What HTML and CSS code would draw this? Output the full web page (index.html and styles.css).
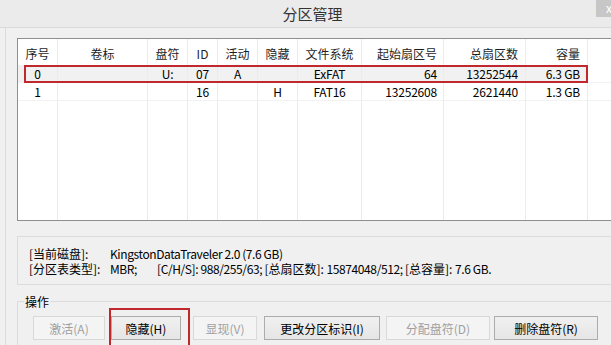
FILE: index.html
```html
<!DOCTYPE html>
<html lang="zh-CN">
<head>
<meta charset="utf-8">
<title>分区管理</title>
<link rel="stylesheet" href="styles.css">
</head>
<body>
<div class="window">
  <div class="titlebar">
    <span class="title">分区管理</span>
    <div class="close"><span>x</span></div>
  </div>
  <div class="main">
    <div class="list">
      <div class="col c1 center"><div class="hd">序号</div><div class="cell sel">0</div><div class="cell">1</div><div class="fill"></div></div>
      <div class="col c2 center"><div class="hd">卷标</div><div class="cell sel"></div><div class="cell"></div><div class="fill"></div></div>
      <div class="col c3 center"><div class="hd">盘符</div><div class="cell sel">U:</div><div class="cell"></div><div class="fill"></div></div>
      <div class="col c4 center"><div class="hd">ID</div><div class="cell sel">07</div><div class="cell">16</div><div class="fill"></div></div>
      <div class="col c5 center"><div class="hd">活动</div><div class="cell sel">A</div><div class="cell"></div><div class="fill"></div></div>
      <div class="col c6 center"><div class="hd">隐藏</div><div class="cell sel"></div><div class="cell">H</div><div class="fill"></div></div>
      <div class="col c7 center"><div class="hd">文件系统</div><div class="cell sel">ExFAT</div><div class="cell">FAT16</div><div class="fill"></div></div>
      <div class="col c8 right"><div class="hd">起始扇区号</div><div class="cell sel">64</div><div class="cell">13252608</div><div class="fill"></div></div>
      <div class="col c9 right"><div class="hd">总扇区数</div><div class="cell sel">13252544</div><div class="cell">2621440</div><div class="fill"></div></div>
      <div class="col c10 right"><div class="hd">容量</div><div class="cell sel">6.3 GB</div><div class="cell">1.3 GB</div><div class="fill"></div></div>
      <div class="col c11"><div class="hd"></div><div class="cell"></div><div class="cell"></div><div class="fill"></div></div>
      <div class="mark mark-row"></div>
    </div>

    <div class="info">
      <div class="info-line"><span class="lbl">[当前磁盘]:</span><span class="val latin">KingstonDataTraveler 2.0 (7.6 GB)</span></div>
      <div class="info-line"><span class="lbl">[分区表类型]:</span><span class="mbr latin">MBR;</span><span class="val"><span class="latin">[C/H/S]: 988/255/63; </span>[总扇区数]: <span class="latin">15874048/512; </span>[总容量]: <span class="latin">7.6 GB.</span></span></div>
    </div>

    <fieldset class="ops">
      <legend>操作</legend>
      <div class="btns">
        <button class="btn b1" disabled>激活(A)</button>
        <button class="btn b2">隐藏(H)</button>
        <button class="btn b3" disabled>显现(V)</button>
        <button class="btn b4">更改分区标识(I)</button>
        <button class="btn b5" disabled>分配盘符(D)</button>
        <button class="btn b6">删除盘符(R)</button>
      </div>
    </fieldset>
    <div class="mark mark-btn"></div>
  </div>
</div>
</body>
</html>
```

FILE: styles.css
```css
* { box-sizing: border-box; }
html, body {
  margin: 0;
  padding: 0;
  width: 611px;
  height: 345px;
  overflow: hidden;
  background: #f0f0f0;
  font-family: "Noto Sans CJK SC", "Noto Sans", sans-serif;
  font-size: 12px;
  color: #000;
}
.window { width: 611px; height: 345px; position: relative; overflow: hidden; }

.titlebar {
  height: 28px;
  background: #ebebeb;
  border-bottom: 1px solid #d9d9d9;
  display: flex;
  justify-content: center;
  align-items: center;
  padding-left: 14px;
  position: relative;
}
.title { font-size: 15px; color: #333; line-height: 20px; padding-top: 1px; }
.close {
  position: absolute;
  right: 0; top: 0;
  width: 15px; height: 17px;
  background: #c7c7c7;
  overflow: hidden;
}
.close span {
  position: absolute;
  left: 10px; top: 0;
  color: #fff;
  font-size: 12px;
  line-height: 16px;
}

.main {
  margin-left: 5px;
  border-left: 1px solid #dcdcdc;
  padding: 10px 0 0 11px;
  height: 317px;
  position: relative;
}

.list {
  width: 700px;
  height: 183px;
  border: 1px solid #8e8f8f;
  background: #fff;
  display: flex;
  position: relative;
  overflow: hidden;
}
.col {
  display: flex;
  flex-direction: column;
  border-right: 1px solid #ececec;
  flex: none;
}
.c1 { width: 40px; }
.c2 { width: 90px; }
.c3 { width: 40px; }
.c4 { width: 30px; }
.c5 { width: 40px; }
.c6 { width: 40px; }
.c7 { width: 64px; }
.c8 { width: 82px; }
.c9 { width: 82px; }
.c10 { width: 62px; }
.c11 { flex: 1; border-right: none; }

.hd {
  height: 26px;
  padding-top: 6px;
  line-height: 18px;
  color: #1e1e1e;
  white-space: nowrap;
  overflow: hidden;
}
.cell {
  height: 18px;
  line-height: 18px;
  white-space: nowrap;
  overflow: hidden;
  letter-spacing: -0.2px;
  border-bottom: 1px solid #f2f2f2;
}
.cell.sel { background: #f1f1f1; border-bottom-color: #f1f1f1; }
.c11 .cell.sel { background: #fff; }
.fill { flex: 1; }
.center { text-align: center; }
.right .hd, .right .cell { text-align: right; padding-right: 6px; }
.c9 .hd, .c9 .cell { padding-right: 7px; }
.c10 .hd, .c10 .cell { padding-right: 7px; }

.mark {
  position: absolute;
  border: 2px solid #c1282e;
  pointer-events: none;
}
.mark-row { left: 6px; top: 26px; width: 564px; height: 18px; }
.mark-btn { left: 103px; top: 280px; width: 81px; height: 50px; }

.info {
  margin-top: 15px;
  height: 49px;
  border-top: 1px solid #dcdcdc;
  border-left: 1px solid #dcdcdc;
  border-bottom: 1px solid #dcdcdc;
  padding-top: 9px;
  padding-left: 11px;
  width: 620px;
}
.info-line { height: 15px; white-space: nowrap; display: flex; }
.info-line > span { display: block; height: 15px; line-height: 15px; flex: none; }
.latin { letter-spacing: -0.4px; }
.lbl { width: 81px; }
.mbr { width: 47px; }

.ops {
  margin: 8px 0 0 0;
  padding: 0 0 0 6px;
  border: none;
  border-top: 1px solid #dcdcdc;
  border-left: 1px solid #dcdcdc;
  width: 620px;
  height: 60px;
}
.ops legend {
  padding: 0 1px;
  line-height: 17px;
  font-size: 12px;
}
.btns {
  display: flex;
  margin-top: 6px;
  margin-left: 9px;
}
.btn {
  height: 24px;
  padding: 0;
  font-family: "Noto Sans CJK SC", "Noto Sans", sans-serif;
  font-size: 12px;
  color: #000;
  background: linear-gradient(#f0f0f0, #e5e5e5);
  border: 1px solid #acacac;
  flex: none;
}
.btn:disabled {
  color: #a0a0a0;
  background: #f4f4f4;
  border-color: #d9d9d9;
}
.b1 { width: 72px; }
.b2 { width: 70px; margin-left: 6px; }
.b3 { width: 64px; margin-left: 12px; }
.b4 { width: 116px; margin-left: 7px; }
.b5 { width: 104px; margin-left: 6px; }
.b6 { width: 104px; margin-left: 4px; }
```
